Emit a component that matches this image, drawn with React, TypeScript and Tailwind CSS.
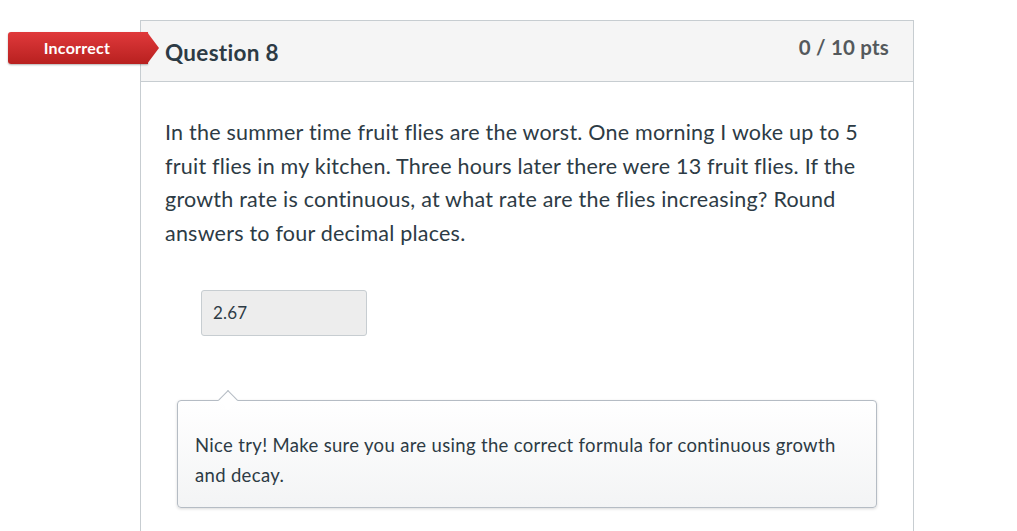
export default function App() {
  return (
    <div className="relative h-[531px] w-[1017px] overflow-hidden bg-white font-['Lato',sans-serif] text-[#2d3b45]">
      {/* Incorrect badge */}
      <div className="absolute left-[8px] top-[32px] flex h-[32px] items-center">
        <div className="flex h-[32px] w-[140px] items-center justify-center rounded-l-[3px] bg-gradient-to-b from-[#e0393b] to-[#b8201f] shadow-[0_1px_2px_rgba(0,0,0,0.3)]">
          <span className="pr-[2px] text-[16px] font-bold tracking-[0.25px] text-white">Incorrect</span>
        </div>
        <svg width="12" height="32" viewBox="0 0 12 32" className="-ml-px">
          <defs>
            <linearGradient id="g" x1="0" y1="0" x2="0" y2="1">
              <stop offset="0" stopColor="#e0393b" />
              <stop offset="1" stopColor="#b8201f" />
            </linearGradient>
          </defs>
          <path d="M0 0 L12 16 L0 32 Z" fill="url(#g)" />
        </svg>
      </div>

      <div className="ml-[140px] mt-[20px] h-[600px] w-[774px] border border-[#c7cdd1] border-b-0">
        <div className="flex h-[61px] items-start justify-between border-b border-[#c7cdd1] bg-[#f5f5f5] pl-[24px] pr-[24px]">
          <h2 className="mt-[19px] text-[22.5px] font-bold leading-[26px] tracking-[0.3px] text-[#2d3b45]">Question 8</h2>
          <span className="mt-[14px] text-[20.5px] font-bold leading-[24px] tracking-[0.2px] text-[#54595c]">0 / 10 pts</span>
        </div>

        <div className="px-[24px] pt-[34px]">
          <p className="w-[700px] text-[21.5px] leading-[33.5px] tracking-[0.22px]">
            In the summer time fruit flies are the worst. One morning I woke up to 5 fruit flies in my kitchen. Three hours later there were 13 fruit flies. If the growth rate is continuous, at what rate are the flies increasing? Round answers to four decimal places.
          </p>

          <div className="ml-[36px] mt-[40px] flex h-[46px] w-[166px] items-center rounded-[3px] border border-[#c7cdd1] bg-[#ededed] px-[11px] text-[17px] tracking-[0.2px]">
            2.67
          </div>

          <div className="relative ml-[12px] mt-[64px] w-[700px] rounded-[4px] border border-[#b5bcc4] bg-gradient-to-b from-white to-[#f3f4f5] px-[17px] pb-[17px] pt-[29px] shadow-[0_1px_3px_rgba(0,0,0,0.15)]">
            <div className="absolute -top-[8px] left-[43px] h-[14px] w-[14px] rotate-45 border-l border-t border-[#b5bcc4] bg-white" />
            <p className="text-[18.5px] leading-[30px] tracking-[0.33px]">
              Nice try! Make sure you are using the correct formula for continuous growth and decay.
            </p>
          </div>
        </div>
      </div>
    </div>
  );
}
